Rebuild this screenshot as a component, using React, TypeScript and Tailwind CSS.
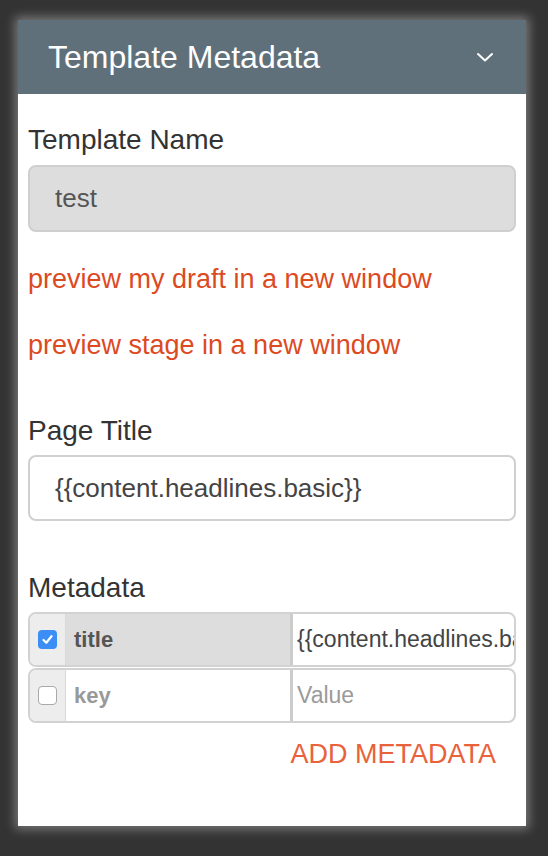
import React from 'react';

const font = { fontFamily: '"Liberation Sans", Arial, Helvetica, sans-serif' };

function Checkbox({ checked }: { checked: boolean }) {
  if (checked) {
    return (
      <div className="flex h-[19px] w-[19px] items-center justify-center rounded-[4px] bg-[#3a8ef5]">
        <svg width="13" height="13" viewBox="0 0 13 13" fill="none">
          <polyline points="2.5,7 5.3,9.8 10.5,3.2" stroke="#fff" strokeWidth="2.2" strokeLinecap="round" strokeLinejoin="round" />
        </svg>
      </div>
    );
  }
  return <div className="h-[19px] w-[19px] rounded-[4px] border border-[#a9a9a9] bg-white" />;
}

function MetaRow({ checked, keyText, value, placeholder }: { checked: boolean; keyText: string; value: string; placeholder?: boolean }) {
  return (
    <div className="flex h-[55px] overflow-hidden rounded-[8px] border-2 border-[#d2d2d2]">
      <div className="flex w-[36px] shrink-0 items-center justify-center border-r border-[#d8d8d8] bg-[#ededed]">
        <Checkbox checked={checked} />
      </div>
      <div className={`flex w-[224px] shrink-0 items-center px-[8px] text-[22px] font-bold ${checked ? 'bg-[#dddddd] text-[#555]' : 'bg-white text-[#999]'}`}>
        {keyText}
      </div>
      <div className="w-[3px] shrink-0 bg-[#cccccc]" />
      <div className={`flex min-w-0 flex-1 items-center overflow-hidden whitespace-nowrap pl-[4px] text-[23px] ${placeholder ? 'text-[#9a9a9a]' : 'text-[#444]'}`}>
        {value}
      </div>
    </div>
  );
}

export default function App() {
  return (
    <div className="min-h-[856px] w-[548px] bg-[#333333] pt-[20px]" style={font}>
      <div className="mx-[18px] h-[806px] w-[508px] bg-white shadow-[0_0_10px_3px_rgba(255,255,255,0.35)]">
        <div className="flex h-[74px] items-center justify-between bg-[#5f707b] pl-[30px] pr-[32px]">
          <span className="text-[32px] text-white">Template Metadata</span>
          <svg width="18" height="12" viewBox="0 0 18 12" fill="none">
            <polyline points="2,3 9,9.5 16,3" stroke="#fff" strokeWidth="2" strokeLinecap="round" strokeLinejoin="round" />
          </svg>
        </div>
        <div className="px-[10px]">
          <div className="pt-[30px] text-[28px] leading-[32px] text-[#333]">Template Name</div>
          <div className="mt-[9px] flex h-[67px] items-center rounded-[8px] border-2 border-[#cfcfcf] bg-[#dddddd] pl-[25px] text-[26px] text-[#555]">
            test
          </div>
          <div className="mt-[31px] text-[27px] leading-[32px] text-[#dc4a1f]">preview my draft in a new window</div>
          <div className="mt-[34px] text-[27px] leading-[32px] text-[#dc4a1f]">preview stage in a new window</div>
          <div className="mt-[54px] text-[28px] leading-[32px] text-[#333]">Page Title</div>
          <div className="mt-[8px] flex h-[66px] items-center rounded-[8px] border-2 border-[#d0d0d0] bg-white pl-[25px] text-[26px] text-[#444]">
            {'{{content.headlines.basic}}'}
          </div>
          <div className="mt-[51px] text-[28px] leading-[32px] text-[#333]">Metadata</div>
          <div className="mt-[8px] flex flex-col gap-[1px]">
            <MetaRow checked keyText="title" value="{{content.headlines.basic}}" />
            <MetaRow checked={false} keyText="key" value="Value" placeholder />
          </div>
          <div className="mt-[16px] flex justify-end pr-[20px]">
            <span className="text-[27px] leading-[30px] text-[#e8623b]">ADD METADATA</span>
          </div>
        </div>
      </div>
    </div>
  );
}
